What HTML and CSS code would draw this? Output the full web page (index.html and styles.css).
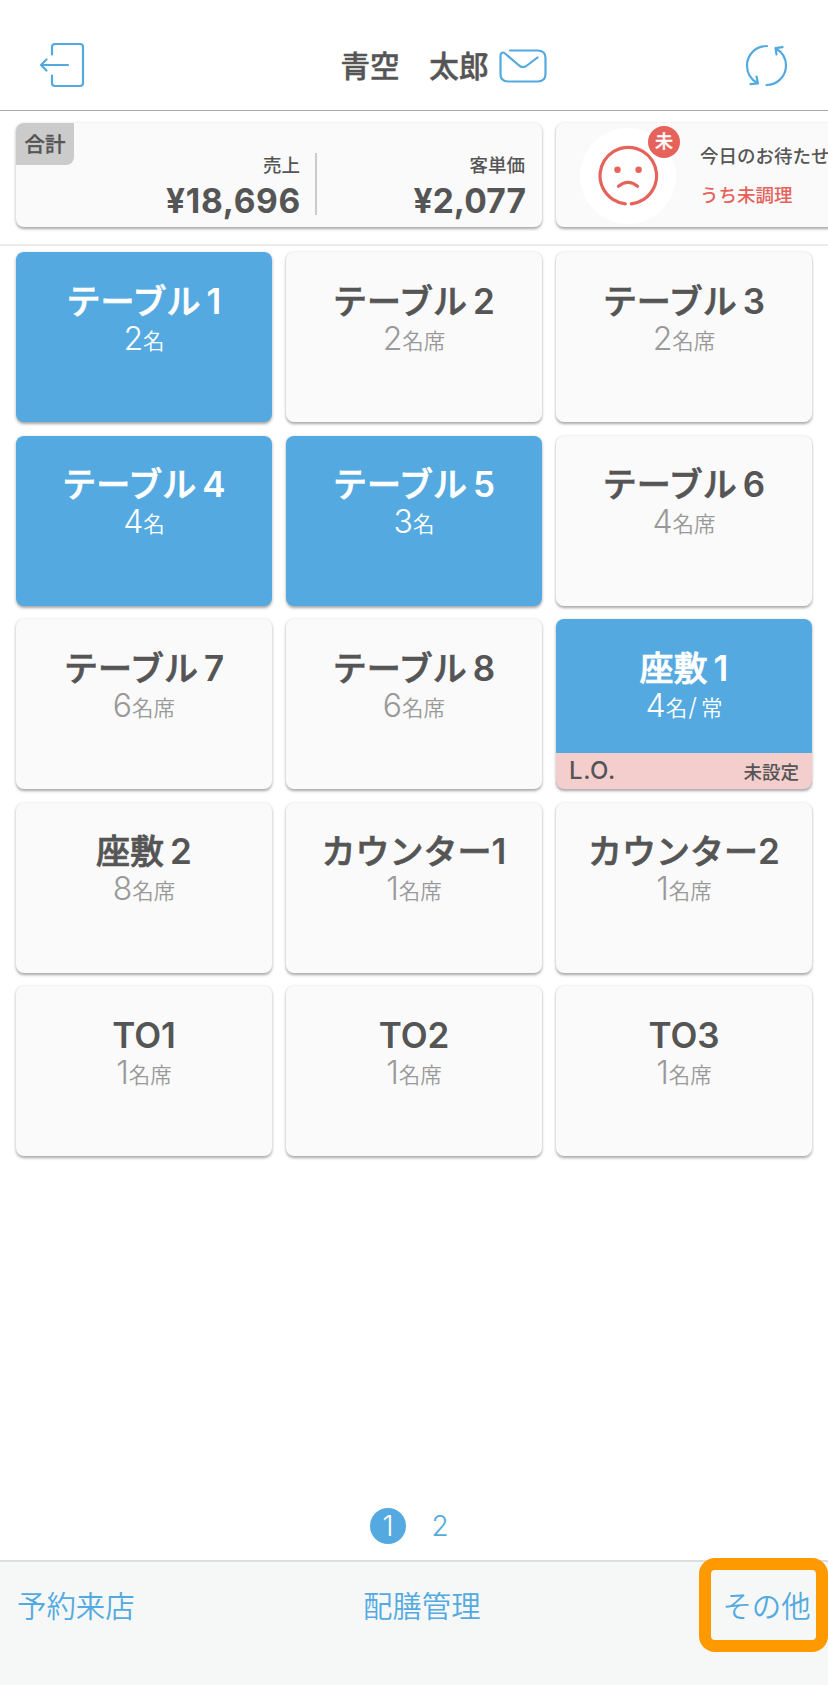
FILE: index.html
```html
<!DOCTYPE html>
<html lang="ja">
<head>
<meta charset="utf-8">
<title>テーブル一覧</title>
<link rel="stylesheet" href="styles.css">
</head>
<body>
<div class="app">
  <header class="header">
    <svg class="icon-exit" width="46" height="46" viewBox="39 42 46 46"><path d="M52 54.5V47Q52 44 55 44H80Q83 44 83 47V83Q83 86 80 86H55Q52 86 52 83V75.5M68 65H41.5M46.5 59.5L41 65L46.5 70.5"/></svg>
    <div class="user"><h1 class="user-name">青空　太郎</h1>
      <svg width="48" height="36" viewBox="499 48 48 36"><path d="M510 50.5H537.500Q545.500 50.500 545.500 58V74Q545.500 81.500 537.500 81.500H508Q500.500 81.500 500.500 74V56Q500.500 52.500 503 52.500Q504 52.500 505 53.500L518.500 65Q522.500 69 527 65.500L537.500 57.500"/></svg>
    </div>
    <svg class="icon-sync" width="44" height="44" viewBox="745 43 44 44"><path d="M767 46C756 46 747 54.500 747 65.500C747 73 751 79.500 757.500 83.200M750.500 84.200L758 83.400L756.500 76.500M775.800 48.500C782 52 786 58 786 65.500C786 76.500 777 85 766.500 85M782.500 47.200L775.500 48.200L776.500 54.500"/></svg>
  </header>
  <section class="summary">
    <div class="card total">
      <span class="chip">合計</span>
      <dl class="stat sales"><dt>売上</dt><dd>¥18,696</dd></dl>
      <dl class="stat average"><dt>客単価</dt><dd>¥2,077</dd></dl>
    </div>
    <div class="card waiting">
      <div class="face">
        <svg width="96" height="96" viewBox="580 127 96 96"><circle class="face-bg" cx="628" cy="175" r="48"/><path d="M625.300 202.800A28.300 28.300 0 1 1 631.300 202.800M618.500 185.300Q628 177.500 637.500 185.300"/><circle class="eye" cx="617.500" cy="168.700" r="3.200"/><circle class="eye" cx="638.600" cy="168.700" r="3.200"/></svg>
        <span class="badge">未</span>
      </div>
      <div class="notice"><p>今日のお待たせ</p><p class="alert">うち未調理</p></div>
    </div>
  </section>
  <main class="tables">
    <div class="card table busy"><h2>テーブル<b>1</b></h2><p><b>2</b>名</p></div>
    <div class="card table"><h2>テーブル<b>2</b></h2><p><b>2</b>名席</p></div>
    <div class="card table"><h2>テーブル<b>3</b></h2><p><b>2</b>名席</p></div>
    <div class="card table busy"><h2>テーブル<b>4</b></h2><p><b>4</b>名</p></div>
    <div class="card table busy"><h2>テーブル<b>5</b></h2><p><b>3</b>名</p></div>
    <div class="card table"><h2>テーブル<b>6</b></h2><p><b>4</b>名席</p></div>
    <div class="card table"><h2>テーブル<b>7</b></h2><p><b>6</b>名席</p></div>
    <div class="card table"><h2>テーブル<b>8</b></h2><p><b>6</b>名席</p></div>
    <div class="card table busy"><h2>座敷<b>1</b></h2><p><b>4</b>名<i>/</i>常</p><div class="last-order"><span class="lo">L.O.</span><span>未設定</span></div></div>
    <div class="card table"><h2>座敷<b>2</b></h2><p><b>8</b>名席</p></div>
    <div class="card table counter"><h2>カウンター<b>1</b></h2><p><b>1</b>名席</p></div>
    <div class="card table counter"><h2>カウンター<b>2</b></h2><p><b>1</b>名席</p></div>
    <div class="card table takeout"><h2><b>TO1</b></h2><p><b>1</b>名席</p></div>
    <div class="card table takeout"><h2><b>TO2</b></h2><p><b>1</b>名席</p></div>
    <div class="card table takeout"><h2><b>TO3</b></h2><p><b>1</b>名席</p></div>
  </main>
  <nav class="pager"><span class="page current">1</span><span class="page">2</span></nav>
  <footer class="footer"><span>予約来店</span><span class="serving">配膳管理</span><span class="other">その他</span></footer>
</div>
</body>
</html>
```

FILE: styles.css
```css
* { box-sizing: border-box; margin: 0; padding: 0; }
body { font-family: Inter, "Noto Sans CJK JP", sans-serif; color: #555; background: #fff; }
.app { width: 828px; height: 1685px; display: flex; flex-direction: column; overflow: hidden; }
svg { display: block; flex: none; fill: none; stroke: #53aae0; stroke-width: 2.2; stroke-linecap: round; stroke-linejoin: round; }

.header { height: 111px; border-bottom: 1px solid #aaa; padding: 20px 39px 0; display: flex; align-items: center; justify-content: space-between; }
.user { display: flex; align-items: center; gap: 11px; padding: 1px 0 0 58px; }
.user-name { font-size: 29.6px; font-weight: 500; line-height: 40px; padding-top: 1px; -webkit-text-stroke: .5px; }

.card { background: #fafafa; border-radius: 8px; box-shadow: 0 1.5px 3px rgba(0,0,0,.35); }
.summary { height: 135px; border-bottom: 2px solid #ebebeb; padding: 12px 0 0 16px; display: flex; gap: 14px; overflow: hidden; }
.summary .card { height: 104px; flex: none; }
.total { width: 526px; display: flex; }
.chip { width: 58px; height: 42px; background: #cbcbcb; border-radius: 8px 0 8px 0; font-size: 20.5px; font-weight: 500; line-height: 44px; text-align: center; -webkit-text-stroke: .3px; }
.stat { text-align: right; margin-top: 30px; height: 62px; }
.stat dt { font-size: 18.5px; font-weight: 500; line-height: 26px; margin-top: -1px; }
.stat dd { font-size: 33.5px; font-weight: 700; line-height: 40px; margin: 3px -1px 0 0; letter-spacing: .7px; }
.stat.average dd { letter-spacing: .1px; }
.sales { width: 243px; padding-right: 15px; border-right: 2px solid #cbcbcb; }
.average { width: 208px; }
.waiting { width: 526px; display: flex; padding: 5px 0 0 24px; }
.face { position: relative; width: 96px; height: 96px; }
.face svg { stroke: #e5635a; stroke-width: 3.2; }
.face .face-bg { fill: #fff; stroke: none; }
.face .eye { fill: #e5635a; stroke: none; }
.badge { position: absolute; left: 68px; top: -2px; width: 32px; height: 32px; border-radius: 50%; background: #e5635a; color: #fff; font-size: 18px; font-weight: 500; line-height: 32px; text-align: center; -webkit-text-stroke: .3px; }
.notice { padding: 14px 0 0 24px; font-size: 18.5px; font-weight: 500; line-height: 28px; white-space: nowrap; }
.alert { margin-top: 11px; color: #e5635a; }

.tables { padding: 6px 16px 0; display: grid; grid-template-columns: repeat(3, 256px); grid-auto-rows: 170px; gap: 13.5px 14px; }
.table { display: flex; flex-direction: column; align-items: center; padding-top: 29.500px; overflow: hidden; }
.table h2 { font-size: 34px; font-weight: 500; line-height: 40px; white-space: nowrap; -webkit-text-stroke: .7px; }
.table h2 b { font-size: 35px; font-weight: 600; margin-left: 6px; line-height: 0; -webkit-text-stroke: 0; }
.table.counter h2 b, .table.takeout h2 b { margin-left: 0; }
.table p { font-size: 21.5px; font-weight: 350; line-height: 38px; color: #999; white-space: nowrap; }
.table p b { font-size: 32px; font-weight: 350; line-height: 0; vertical-align: -1px; }
.table p i { font-size: 25px; font-style: normal; line-height: 0; margin: 0 4px 0 1px; }
.busy { background: #54aae0; }
.busy h2, .table.busy p { color: #fff; }
.last-order { width: 100%; height: 36px; margin-top: auto; padding: 0 13px 1px; background: #f4cdcd; display: flex; align-items: center; justify-content: space-between; font-size: 18.5px; font-weight: 500; }
.last-order .lo { font-size: 24px; letter-spacing: .6px; }

.pager { margin-top: auto; margin-bottom: 16px; padding-left: 370px; display: flex; gap: 16px; }
.page { width: 36px; height: 36px; border-radius: 50%; color: #53aae0; font-size: 28px; font-weight: 350; line-height: 36px; text-align: center; }
.current { background: #54aae0; color: #fff; }
.footer { height: 125px; flex: none; border-top: 2px solid #dcdddd; background: #f6f8f8; padding: 0 0 0 17px; display: flex; justify-content: space-between; font-size: 29.4px; font-weight: 350; line-height: 90px; color: #53aae0; }
.serving { padding-left: 10px; }
.other { width: 129px; height: 94px; margin-top: -4px; border: 12px solid #f90; border-radius: 16px; line-height: 74px; text-align: center; padding-left: 6px; }
```
